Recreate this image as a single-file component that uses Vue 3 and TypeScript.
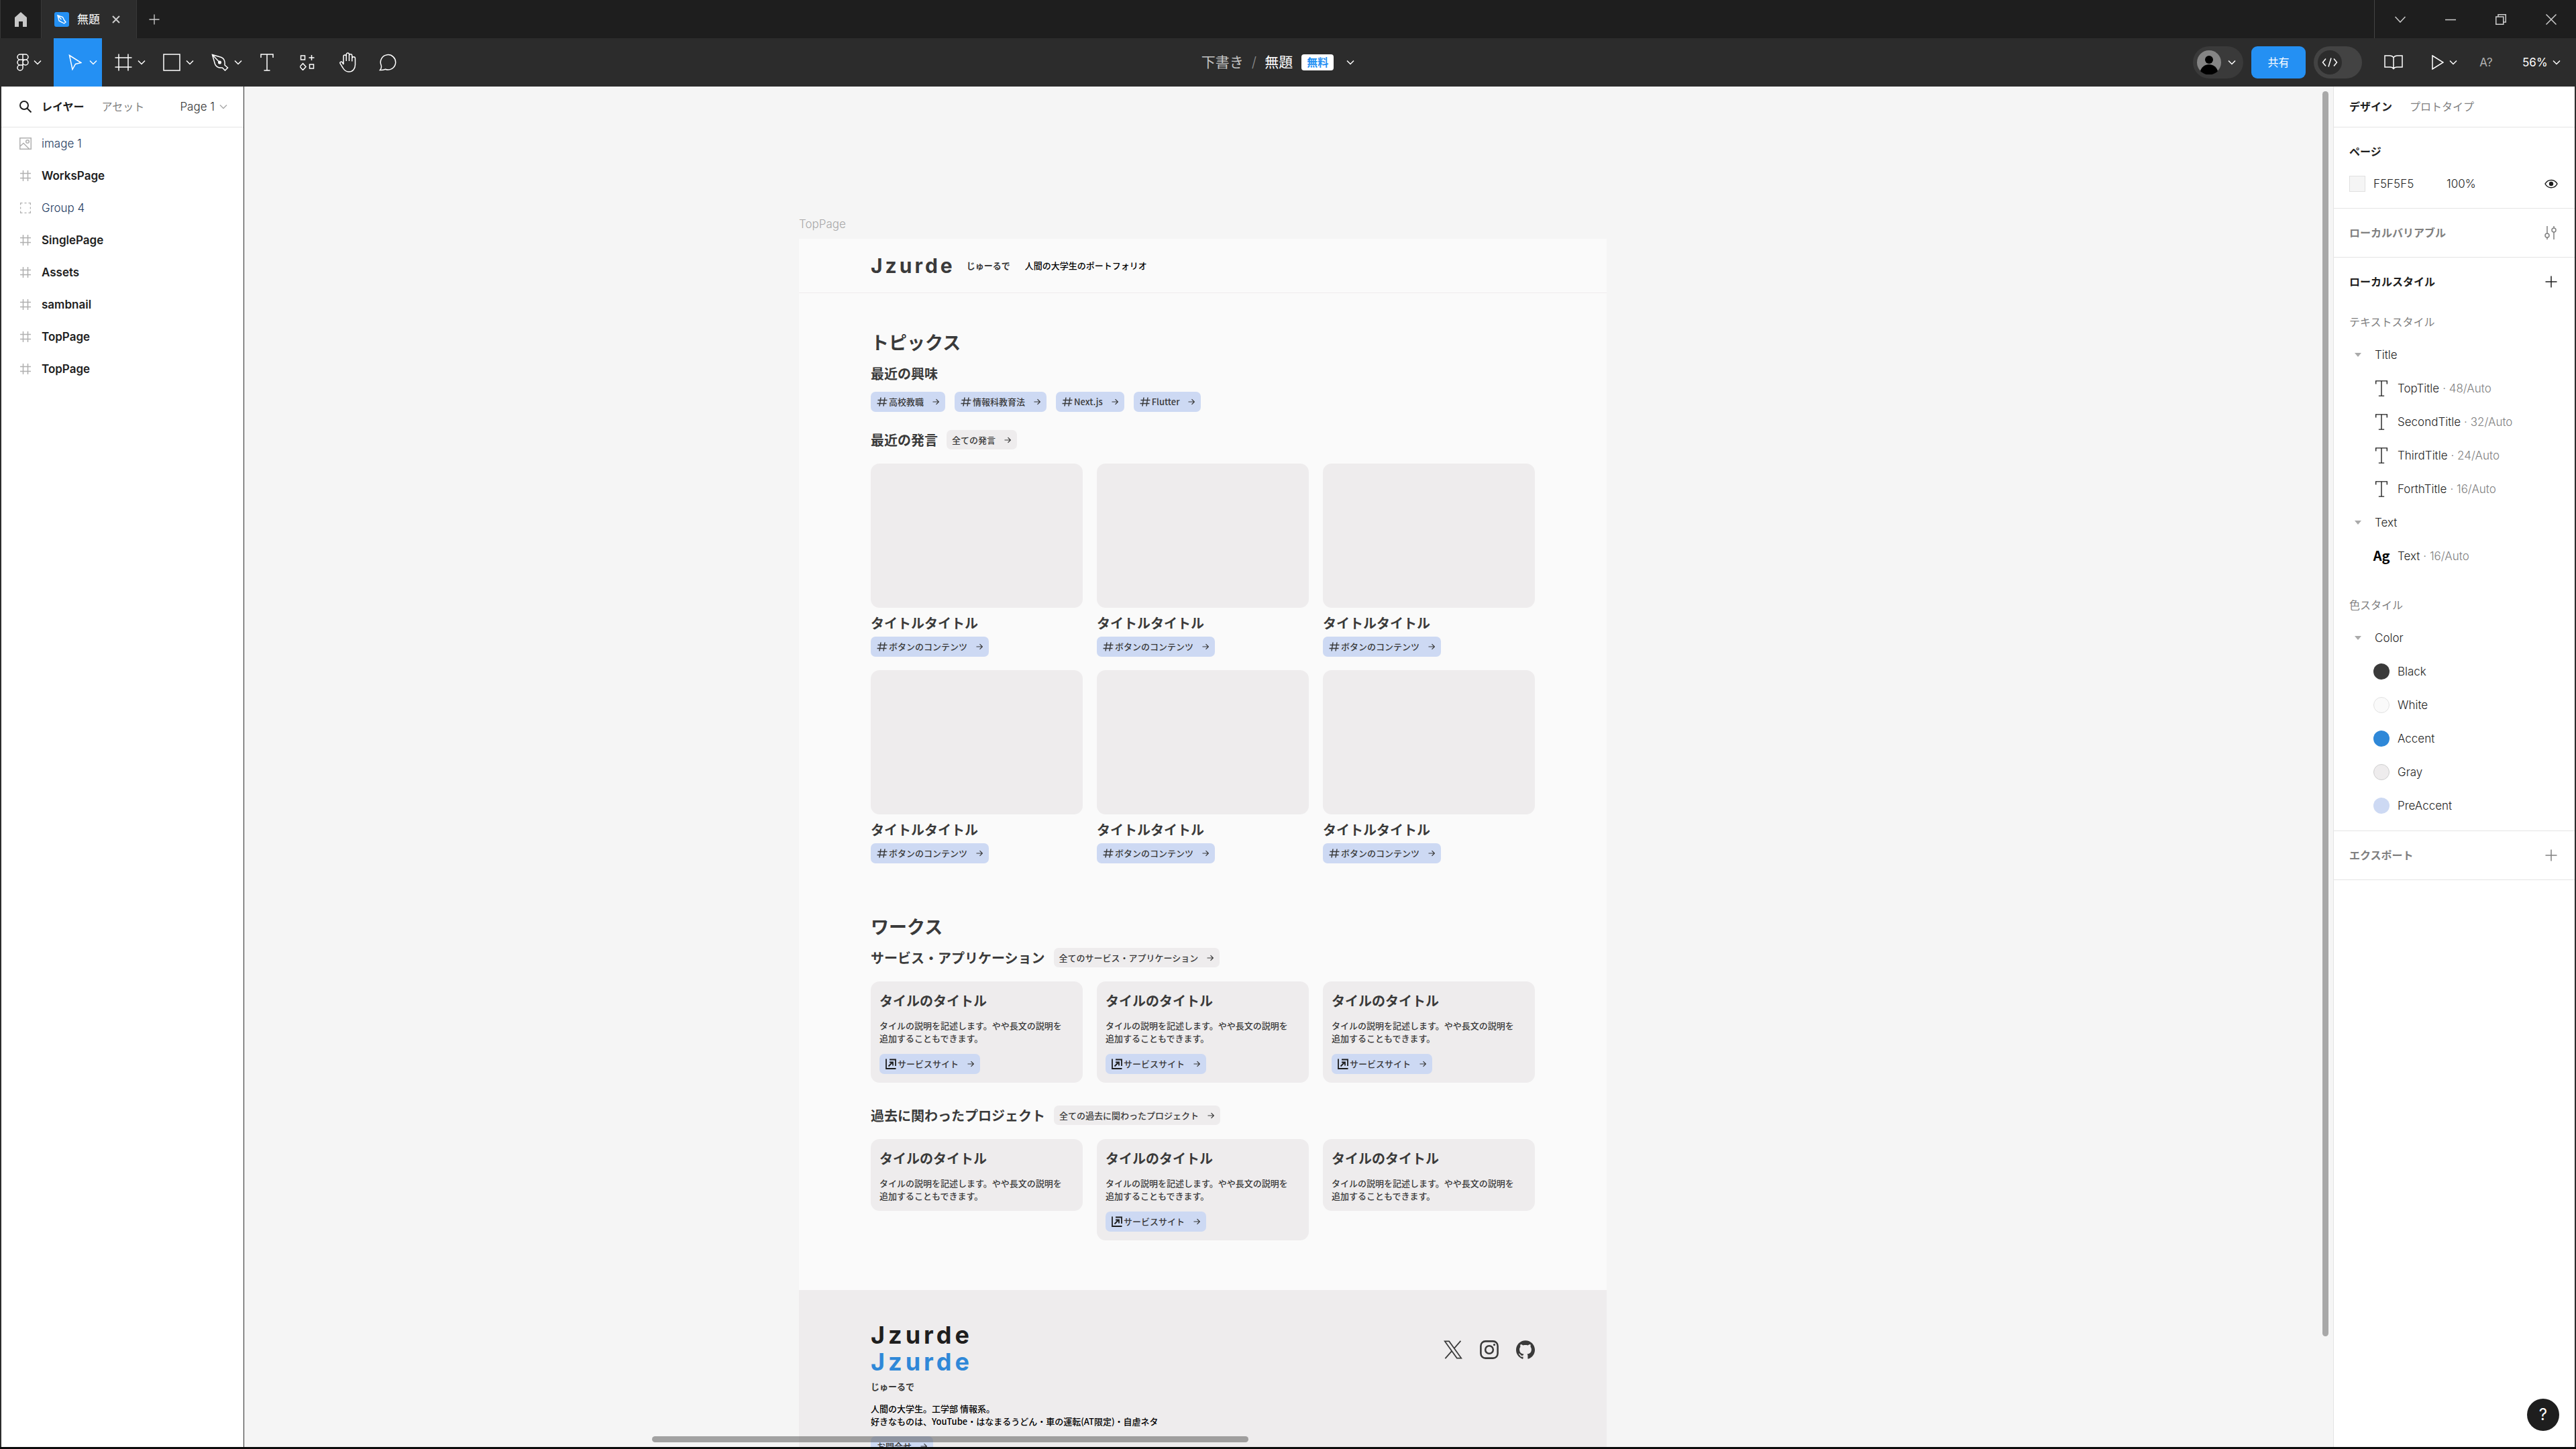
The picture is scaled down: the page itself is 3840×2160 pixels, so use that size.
<script setup lang="ts">
interface Layer { name: string; icon: string; bold: boolean }
interface Work { title: string; body: string; link: boolean }

const layers: Layer[] = [
  { name: 'image 1', icon: 'image', bold: false },
  { name: 'WorksPage', icon: 'hash', bold: true },
  { name: 'Group 4', icon: 'group', bold: false },
  { name: 'SinglePage', icon: 'hash', bold: true },
  { name: 'Assets', icon: 'hash', bold: true },
  { name: 'sambnail', icon: 'hash', bold: true },
  { name: 'TopPage', icon: 'hash', bold: true },
  { name: 'TopPage', icon: 'hash', bold: true },
]
const menuTools = [
  { label: 'メインメニュー', icon: 'figma', w: 18, h: 26, active: false },
  { label: '移動', icon: 'move', w: 20, h: 24, active: true },
  { label: 'フレーム', icon: 'frame', w: 26, h: 26, active: false },
  { label: '長方形', icon: 'rect', w: 26, h: 26, active: false },
  { label: 'ペン', icon: 'pen', w: 26, h: 26, active: false },
]
const tools = [
  { label: 'テキスト', icon: 'text', w: 20, h: 26 },
  { label: 'リソース', icon: 'parts', w: 22, h: 24 },
  { label: '手のひらツール', icon: 'hand', w: 26, h: 30 },
  { label: 'コメント', icon: 'comment', w: 26, h: 26 },
]
const interests = ['高校教職', '情報科教育法', 'Next.js', 'Flutter']
const posts = Array.from({ length: 6 }, () => ({ title: 'タイトルタイトル', tag: 'ボタンのコンテンツ' }))
const body = 'タイルの説明を記述します。やや長文の説明を\n追加することもできます。'
const makeWorks = (links: boolean[]): Work[] =>
  links.map((link) => ({ title: 'タイルのタイトル', body, link }))
const workGroups = [
  { title: 'サービス・アプリケーション', all: '全てのサービス・アプリケーション', works: makeWorks([true, true, true]) },
  { title: '過去に関わったプロジェクト', all: '全ての過去に関わったプロジェクト', works: makeWorks([false, true, false]) },
]
const textStyles = [
  { name: 'TopTitle', size: '48/Auto' },
  { name: 'SecondTitle', size: '32/Auto' },
  { name: 'ThirdTitle', size: '24/Auto' },
  { name: 'ForthTitle', size: '16/Auto' },
]
const colors = [
  { name: 'Black', key: 'black' },
  { name: 'White', key: 'white' },
  { name: 'Accent', key: 'accent' },
  { name: 'Gray', key: 'gray' },
  { name: 'PreAccent', key: 'pre' },
]
</script>

<template>
  <div class="app">
    <svg class="defs" aria-hidden="true">
      <symbol id="i-chev" viewBox="0 0 12 8"><path d="M1 1.5l5 5 5-5" /></symbol>
      <symbol id="i-figma" viewBox="0 0 18 26"><path d="M9 1H5a4 4 0 0 0 0 8h4zM9 1h4a4 4 0 0 1 0 8H9zM9 9H5a4 4 0 0 0 0 8h4zM13 9a4 4 0 1 1 0 8 4 4 0 0 1 0-8zM9 17H5a4 4 0 1 0 4 4z" /></symbol>
      <symbol id="i-move" viewBox="0 0 20 24"><path d="M1.5 1.5L19 12.500l-8.500 2-4.500 8z" /></symbol>
      <symbol id="i-frame" viewBox="0 0 26 26"><path d="M6 .5v25M20 .5v25M.5 6h25M.5 20h25" /></symbol>
      <symbol id="i-rect" viewBox="0 0 26 26"><path d="M1 1h24v24H1z" /></symbol>
      <symbol id="i-pen" viewBox="0 0 26 26"><path d="M1.500 1.500L15 5.500c4 1.500 5.500 6.500 5 11.500l4.500 4-4 4-4-4c-5 .5-9.500-1.500-11-5.500zM1.500 1.500l9.500 10" /><circle cx="12.500" cy="13" r="1.800" fill="currentColor" /></symbol>
      <symbol id="i-text" viewBox="0 0 20 26"><path d="M1 6V1h18v5M10 1v24M5.500 25h9" /></symbol>
      <symbol id="i-parts" viewBox="0 0 22 24"><path d="M1.500 2h6v6h-6zM14.500 15h6v6h-6zM17.500 1v8M13.500 5h8M4.500 13.500l4.500 5-4.500 5-4.500-5z" /></symbol>
      <symbol id="i-hand" viewBox="0 0 26 30"><path d="M7 18V6a2.100 2.100 0 0 1 4.200 0v7M11.200 13V3.200a2.100 2.100 0 0 1 4.300 0V13M15.500 5a2.100 2.100 0 0 1 4.300 0v8.500M19.800 9a2.300 2.300 0 0 1 4.700 0v9.500c0 6-3.500 10.500-9.500 10.500-4.500 0-7-2.500-9-6l-4-6.500c-.8-2 1.800-3.300 3.200-1.600L7 18" /></symbol>
      <symbol id="i-comment" viewBox="0 0 26 26"><path d="M1.500 24.500c1.700-2 2.600-4.500 1.600-7.500A11.200 11.200 0 1 1 9.500 23.300c-2.500 1-5.500 1.300-8 1.200z" /></symbol>
      <symbol id="i-hash" viewBox="0 0 16 16"><path d="M4.500 0v16M11.500 0v16M0 4.500h16M0 11.500h16" /></symbol>
      <symbol id="i-group" viewBox="0 0 16 16"><path d="M.5 3.500v-3h3M6.500.5h3M12.500.5h3v3M15.500 6.500v3M15.500 12.500v3h-3M9.500 15.500h-3M3.500 15.500h-3v-3M.5 9.500v-3" /></symbol>
      <symbol id="i-image" viewBox="0 0 18 18"><path d="M.75.75h16.500v16.500H.75zM1 13l5-4.500 8.500 8.500" /><circle cx="12" cy="6" r="2.300" /></symbol>
      <symbol id="i-tag" viewBox="0 0 16 16"><path d="M6 1.500l-2 13M12 1.500l-2 13M1.500 5.500h14M.5 10.500h14" /></symbol>
      <symbol id="i-arrow" viewBox="0 0 10 10"><path d="M.5 5h8.500M5.500 1.200L9.300 5 5.500 8.800" /></symbol>
      <symbol id="i-site" viewBox="0 0 16 16"><path d="M1 .500V15h14.500M6 1.500h9V11M4.500 11.500l6-6M6 5.500h5v5" /></symbol>
      <symbol id="i-plus" viewBox="0 0 18 18"><path d="M9 .5v17M.5 9h17" /></symbol>
    </svg>

    <header class="tabs">
      <button class="home" aria-label="ホーム"><svg width="18" height="22" viewBox="0 0 18 22"><path fill="#c8c8c8" d="M9 0l9 8v14h-6v-8H6v8H0V8z" /></svg></button>
      <div class="file-tab">
        <svg width="22" height="22" viewBox="0 0 22 22"><rect width="22" height="22" rx="3" fill="#2490f3" /><path d="M5 5l7.500 2.500 2.500 5 2 2.500-2.500 2-2.500-1.500-5-2.500zM5 5l5.500 6" fill="none" stroke="#fff" stroke-width="1.400" /></svg>
        <span class="file-name">無題</span>
        <button class="plain" aria-label="タブを閉じる"><svg width="12" height="12" viewBox="0 0 12 12"><path d="M1 1l10 10M11 1L1 11" stroke="#ccc" stroke-width="2" /></svg></button>
      </div>
      <button class="plain new-tab" aria-label="新規タブ"><svg class="line" width="16" height="16"><use href="#i-plus" /></svg></button>
      <div class="window">
        <button aria-label="タブ一覧"><svg width="16" height="10" viewBox="0 0 16 10"><path d="M.5 1l7.500 8 7.500-8" /></svg></button>
        <button aria-label="最小化"><svg width="16" height="16" viewBox="0 0 16 16"><path d="M0 8.500h16" /></svg></button>
        <button aria-label="元に戻す"><svg width="16" height="16" viewBox="0 0 16 16"><path d="M.75 4h11v11.250h-11zM4 4V.75h11.250V12h-3.500" /></svg></button>
        <button aria-label="閉じる"><svg width="16" height="16" viewBox="0 0 16 16"><path d="M.5.5l15 15M15.500.5l-15 15" /></svg></button>
      </div>
    </header>

    <div class="toolbar">
      <div class="tools">
        <button v-for="t in menuTools" :key="t.icon" class="menu-tool" :class="{ active: t.active }" :aria-label="t.label">
          <span class="tool-icon"><svg class="line" :width="t.w" :height="t.h"><use :href="`#i-${t.icon}`" /></svg></span>
          <svg class="line chev"><use href="#i-chev" /></svg>
        </button>
        <button v-for="t in tools" :key="t.icon" class="tool" :aria-label="t.label">
          <svg class="line" :width="t.w" :height="t.h"><use :href="`#i-${t.icon}`" /></svg>
        </button>
      </div>
      <div class="doc">
        <a class="folder" href="#drafts">下書き</a>
        <span class="slash">/</span>
        <span class="doc-name">無題</span>
        <span class="free">無料</span>
        <button class="plain doc-menu" aria-label="ファイルメニュー"><svg class="line chev"><use href="#i-chev" /></svg></button>
      </div>
      <div class="actions">
        <button class="account" aria-label="アカウント">
          <svg width="36" height="36" viewBox="0 0 36 36"><circle cx="18" cy="18" r="18" fill="#858585" /><circle cx="18" cy="14" r="6" /><path d="M5 31c1.500-6 7-10 13-10s11.500 4 13 10a18 18 0 0 1-26 0z" /></svg>
          <svg class="line chev"><use href="#i-chev" /></svg>
        </button>
        <button class="share">共有</button>
        <button class="dev" aria-label="開発モード"><span><svg class="line" width="24" height="14" viewBox="0 0 24 14"><path d="M6 1.500L1.500 7 6 12.500M18 1.500L22.500 7 18 12.500M14 .5l-4 13" /></svg></span></button>
        <button class="tool book" aria-label="ライブラリ"><svg class="line" width="28" height="22" viewBox="0 0 28 22"><path d="M14 4c-1-2-3-3-6-3H1v17h8c3 0 4 1 5 2.500 1-1.500 2-2.500 5-2.500h8V1h-7c-3 0-5 1-6 3zM14 4v16" /></svg></button>
        <button class="play" aria-label="再生"><svg class="line" width="18" height="22" viewBox="0 0 18 22"><path d="M1 1l16 10L1 21z" /></svg><svg class="line chev"><use href="#i-chev" /></svg></button>
        <button class="tool missing" aria-label="不足しているフォント">A?</button>
        <button class="zoom">56%<svg class="line chev"><use href="#i-chev" /></svg></button>
      </div>
    </div>

    <div class="work">
      <aside class="left">
        <div class="left-head">
          <button class="plain search" aria-label="検索"><svg width="18" height="18" viewBox="0 0 18 18"><circle cx="7" cy="7" r="6" /><path d="M11.500 11.500l6 6" /></svg></button>
          <button class="plain on">レイヤー</button>
          <button class="plain off">アセット</button>
          <button class="plain pages">Page 1<svg class="line chev"><use href="#i-chev" /></svg></button>
        </div>
        <ul class="layers">
          <li v-for="(l, i) in layers" :key="i">
            <button class="layer" :class="{ bold: l.bold }">
              <span class="layer-icon"><svg class="line" :class="l.icon"><use :href="`#i-${l.icon}`" /></svg></span>{{ l.name }}
            </button>
          </li>
        </ul>
      </aside>

      <main class="canvas">
        <div class="artboard">
          <div class="board-label">TopPage</div>
          <div class="board">
            <div class="site-head">
              <span class="logo">Jzurde</span>
              <span class="reading">じゅーるで</span>
              <span class="lead">人間の大学生のポートフォリオ</span>
            </div>
            <div class="site-main">
              <h2>トピックス</h2>
              <div class="sub"><h3>最近の興味</h3></div>
              <div class="chips">
                <a v-for="t in interests" :key="t" class="chip" href="#tag"><svg class="chip-icon"><use href="#i-tag" /></svg>{{ t }}<svg class="arrow"><use href="#i-arrow" /></svg></a>
              </div>
              <div class="sub"><h3>最近の発言</h3><a class="all" href="#all">全ての発言<svg class="arrow"><use href="#i-arrow" /></svg></a></div>
              <div class="grid">
                <article v-for="(p, i) in posts" :key="i" class="post">
                  <div class="thumb"></div>
                  <h4>{{ p.title }}</h4>
                  <a class="chip" href="#tag"><svg class="chip-icon"><use href="#i-tag" /></svg>{{ p.tag }}<svg class="arrow"><use href="#i-arrow" /></svg></a>
                </article>
              </div>
              <h2 class="works">ワークス</h2>
              <section v-for="g in workGroups" :key="g.title" class="group">
                <div class="sub"><h3>{{ g.title }}</h3><a class="all" href="#all">{{ g.all }}<svg class="arrow"><use href="#i-arrow" /></svg></a></div>
                <div class="grid">
                  <article v-for="(w, i) in g.works" :key="i" class="tile">
                    <h4>{{ w.title }}</h4>
                    <p>{{ w.body }}</p>
                    <a v-if="w.link" class="chip" href="#site"><svg class="chip-icon site"><use href="#i-site" /></svg>サービスサイト<svg class="arrow"><use href="#i-arrow" /></svg></a>
                  </article>
                </div>
              </section>
            </div>
            <footer class="site-foot">
              <div>
                <div class="big-logo">Jzurde</div>
                <div class="big-logo accent">Jzurde</div>
                <div class="foot-reading">じゅーるで</div>
                <p>人間の大学生。工学部 情報系。<br />好きなものは、YouTube・はなまるうどん・車の運転(AT限定)・自虐ネタ</p>
                <a class="chip contact" href="#contact">お問合せ<svg class="arrow"><use href="#i-arrow" /></svg></a>
              </div>
              <div class="social">
                <a href="#x" aria-label="X"><svg class="stroked" viewBox="0 0 24 24"><path d="M1.500 1.200h5.500l15.500 21.600H17zM21.800.8l-8.800 10M10.500 13.600L2 23.200" stroke-width="1.500" /></svg></a>
                <a href="#instagram" aria-label="Instagram"><svg class="stroked" viewBox="0 0 24 24"><rect x="1.200" y="1.200" width="21.600" height="21.600" rx="6" stroke-width="2.200" /><circle cx="12" cy="12" r="5" stroke-width="2.200" /><circle cx="18.400" cy="5.600" r=".7" stroke-width="1.400" /></svg></a>
                <a href="#github" aria-label="GitHub"><svg viewBox="0 0 24 24"><path d="M12 .297c-6.630 0-12 5.373-12 12 0 5.303 3.438 9.800 8.205 11.385.6.113.82-.258.82-.577 0-.285-.010-1.040-.015-2.040-3.338.724-4.042-1.610-4.042-1.610C4.422 18.070 3.633 17.700 3.633 17.700c-1.087-.744.084-.729.084-.729 1.205.084 1.838 1.236 1.838 1.236 1.070 1.835 2.809 1.305 3.495.998.108-.776.417-1.305.76-1.605-2.665-.3-5.466-1.332-5.466-5.930 0-1.310.465-2.380 1.235-3.220-.135-.303-.54-1.523.105-3.176 0 0 1.005-.322 3.300 1.230.96-.267 1.980-.399 3-.405 1.020.006 2.040.138 3 .405 2.280-1.552 3.285-1.230 3.285-1.230.645 1.653.24 2.873.12 3.176.765.84 1.230 1.910 1.230 3.220 0 4.610-2.805 5.625-5.475 5.920.42.36.81 1.096.81 2.220 0 1.606-.015 2.896-.015 3.286 0 .315.21.69.825.57C20.565 22.092 24 17.592 24 12.297c0-6.627-5.373-12-12-12" /></svg></a>
              </div>
            </footer>
          </div>
        </div>
        <div class="bar-v"></div>
        <div class="bar-h"></div>
      </main>

      <aside class="right">
        <div class="right-head">
          <button class="plain on">デザイン</button>
          <button class="plain off">プロトタイプ</button>
        </div>
        <section class="page-props">
          <h5>ページ</h5>
          <div class="fill">
            <span class="swatch"></span>
            <input class="hex" aria-label="背景色" value="F5F5F5" />
            <input class="alpha" aria-label="不透明度" value="100%" />
            <button class="plain" aria-label="表示"><svg width="20" height="14" viewBox="0 0 20 14"><path d="M1 7c4-7.500 14-7.500 18 0-4 7.500-14 7.500-18 0z" fill="none" stroke="#1e1e1e" stroke-width="1.500" /><circle cx="10" cy="7" r="3.200" fill="#1e1e1e" /></svg></button>
          </div>
        </section>
        <section class="row72 dim">
          <h5>ローカルバリアブル</h5>
          <button class="plain" aria-label="バリアブルを開く"><svg class="line" width="20" height="22" viewBox="0 0 20 22"><path d="M5 1v11M5 18v3M15 1v3M15 10v11" /><circle cx="5" cy="15" r="3" /><circle cx="15" cy="7" r="3" /></svg></button>
        </section>
        <section class="styles">
          <div class="row72">
            <h5>ローカルスタイル</h5>
            <button class="plain" aria-label="スタイルを追加"><svg class="line" width="18" height="18"><use href="#i-plus" /></svg></button>
          </div>
          <div class="caption">テキストスタイル</div>
          <button class="fold"><i></i>Title</button>
          <button v-for="s in textStyles" :key="s.name" class="style">
            <span class="mark"><svg class="line" width="20" height="24" viewBox="0 0 20 26"><use href="#i-text" /></svg></span>{{ s.name }}<em>· {{ s.size }}</em>
          </button>
          <button class="fold"><i></i>Text</button>
          <button class="style"><span class="mark ag">Ag</span>Text<em>· 16/Auto</em></button>
          <div class="caption second">色スタイル</div>
          <button class="fold"><i></i>Color</button>
          <button v-for="c in colors" :key="c.key" class="style"><span class="mark dot" :class="c.key"></span>{{ c.name }}</button>
        </section>
        <section class="row72 dim">
          <h5>エクスポート</h5>
          <button class="plain" aria-label="エクスポートを追加"><svg class="line" width="18" height="18"><use href="#i-plus" /></svg></button>
        </section>
        <button class="help" aria-label="ヘルプ">?</button>
      </aside>
    </div>
  </div>
</template>

<style>
body { margin: 0; background: #111; }
</style>

<style scoped>
* { box-sizing: border-box; }
.app {
  display: flex; flex-direction: column; height: 100vh; overflow: hidden;
  border-bottom: 3px solid #0c0c0c;
  font-family: Inter, "Noto Sans CJK JP", sans-serif; font-size: 16px; line-height: 24px; color: #1e1e1e;
}
.defs { position: absolute; width: 0; height: 0; }
svg { display: block; flex: none; }
button { font: inherit; color: inherit; border: 0; background: none; padding: 0; margin: 0; }
a { color: inherit; text-decoration: none; }
h2, h3, h4, h5, p, ul { margin: 0; padding: 0; }
.plain { display: flex; align-items: center; }
.line { fill: none; stroke: currentColor; stroke-width: 1.5; }
.chev { width: 12px; height: 8px; }

.tabs { display: flex; height: 57px; background: #1e1e1e; color: #ccc; flex: none; }
.home { width: 62px; border-left: 1px solid #383838; border-right: 1px solid #383838; display: flex; align-items: center; justify-content: center; }
.file-tab { display: flex; align-items: center; width: 142px; padding-left: 19px; background: #2c2c2c; border-right: 1px solid #383838; }
.file-name { margin: 0 18px 0 12px; font-size: 17px; color: #fff; }
.new-tab { padding-left: 18px; }
.window { display: flex; margin-left: auto; border-left: 1px solid #444; }
.window button { width: 75px; display: flex; align-items: center; justify-content: center; }
.window svg { fill: none; stroke: #ccc; stroke-width: 1.5; }

.toolbar { display: grid; grid-template-columns: 1fr auto 1fr; height: 72px; background: #2c2c2c; color: #fff; flex: none; }
.tools { display: flex; padding-left: 8px; }
.menu-tool { display: flex; align-items: center; width: 72px; padding-left: 16px; }
.menu-tool.active { background: #2490f3; }
.tool-icon { width: 32px; margin-right: 5px; display: flex; justify-content: center; }
.menu-tool:first-child { padding-left: 10px; }
.menu-tool:first-child .tool-icon { margin-right: 0; }
.tool { width: 60px; display: flex; align-items: center; justify-content: center; }
.doc { display: flex; align-items: center; font-size: 21px; }
.folder { color: #c4c4c4; }
.slash { margin: 0 12px; color: #8a8a8a; font-weight: 300; }
.free { margin-left: 13px; width: 48px; height: 24px; border-radius: 4px; background: #fff; color: #2490f3; font-size: 16px; font-weight: 700; line-height: 24px; text-align: center; }
.doc-menu { padding: 0 30px 0 19px; }
.actions { display: flex; align-items: center; justify-content: flex-end; }
.account { display: flex; align-items: center; gap: 10px; width: 75px; height: 48px; padding-left: 6px; border-radius: 24px; background: #3a3a3a; }
.share { width: 81px; height: 48px; margin: 0 12px; border-radius: 9px; background: #2490f3; }
.dev { width: 72px; height: 48px; padding: 6px; border-radius: 24px; background: #434343; }
.dev span { display: flex; align-items: center; justify-content: center; width: 36px; height: 36px; border-radius: 50%; background: #2c2c2c; }
.book { margin-left: 17px; }
.play { display: flex; align-items: center; gap: 8px; width: 78px; padding-left: 27px; }
.missing { font-size: 17px; color: #b0b0b0; }
.zoom { display: flex; align-items: center; gap: 7px; width: 104px; padding-left: 24px; font-size: 17px; }

.work { display: grid; grid-template-columns: 364px minmax(0, 1fr) 362px; flex: 1; min-height: 0; }
.left { background: #fff; border-left: 2px solid #2c2c2c; border-right: 1px solid #2c2c2c; }
.left-head { display: flex; align-items: center; height: 61px; padding: 0 24px 0 27px; border-bottom: 1px solid #e4e4e4; }
.search svg { fill: none; stroke: #1e1e1e; stroke-width: 2; }
.search { margin-right: 15px; }
.on { font-weight: 700; }
.off { margin-left: 26px; color: #808080; }
.pages { margin-left: auto; gap: 7px; color: #333; font-size: 17px; font-weight: 300; }
.pages .chev { color: #aaa; }
.layers { list-style: none; }
.layer { display: flex; align-items: center; width: 100%; height: 48px; padding-left: 26px; font-size: 17px; font-weight: 300; color: #1c3a60; text-align: left; }
.layer.bold { font-weight: 600; color: #1e1e1e; }
.layer-icon { display: flex; justify-content: center; width: 20px; margin-right: 14px; color: #b0b0b0; }
.layer-icon svg { width: 16px; height: 16px; }
.layer-icon svg.image { width: 18px; height: 18px; }

.canvas { position: relative; overflow: hidden; background: #f5f5f5; }
.artboard { position: absolute; left: 827px; top: 193px; width: 1204px; font-family: "Noto Sans CJK JP", sans-serif; font-size: 13px; color: #3a3a3a; }
.board-label { height: 34px; font-family: Inter, sans-serif; font-size: 17px; font-weight: 300; line-height: 24px; color: #a8a8a8; }
.board { background: #fafafa; }
.site-head { display: flex; align-items: center; height: 81px; padding-left: 107px; border-bottom: 1px solid #eeeced; font-weight: 700; }
.logo, .big-logo { font-family: Inter, sans-serif; font-weight: 700; }
.logo { font-size: 30px; letter-spacing: 4px; line-height: 40px; }
.reading { margin: 0 22px 0 17px; }
.lead { color: #000; font-weight: 500; }
.site-main { padding: 53px 107px 74px; }
h2 { font-size: 27px; line-height: 40px; font-weight: 700; margin-bottom: 12px; }
.sub { display: flex; align-items: center; gap: 13px; height: 29px; }
h3, h4 { font-size: 20px; line-height: 29px; font-weight: 700; }
.chips { display: flex; gap: 14px; margin: 13px 0 27px; }
.chip { display: inline-flex; align-items: center; height: 30px; padding: 0 9px; border-radius: 7px; background: #cdd9f3; font-weight: 500; }
.chip-icon { width: 16px; height: 16px; margin-right: 2px; fill: none; stroke: #3a3a3a; stroke-width: 1.5; }
.chip-icon.site { stroke: #1e1e1e; stroke-width: 1.8; }
.arrow { width: 10px; height: 10px; margin-left: 13px; fill: none; stroke: #3a3a3a; stroke-width: 1.2; }
.all { display: flex; align-items: center; height: 29px; padding: 0 9px 0 8px; border-radius: 7px; background: #eeeced; font-weight: 500; }
.grid { display: grid; grid-template-columns: repeat(3, minmax(0, 1fr)); gap: 20px 21px; align-items: start; margin-top: 21px; }
.thumb { height: 215px; border-radius: 13px; background: #eeeced; }
.post h4 { margin: 8px 0 6px; }
.post .chip { display: flex; width: fit-content; }
.works { margin-top: 74px; }
.group + .group { margin-top: 34px; }
.tile { padding: 14px 13px 13px; border-radius: 13px; background: #eeeced; }
.tile p { margin-top: 13px; line-height: 19px; white-space: pre-line; font-weight: 500; }
.tile .chip { display: flex; width: fit-content; margin-top: 14px; }
.site-foot { display: flex; justify-content: space-between; height: 420px; padding: 47px 107px 0; background: #eeeced; }
.big-logo { font-size: 36px; line-height: 40px; letter-spacing: 5px; color: #1e1e1e; }
.big-logo.accent { color: #2f88d8; }
.foot-reading { margin-top: 7px; line-height: 20px; font-weight: 700; }
.site-foot p { margin-top: 13px; line-height: 19px; font-weight: 500; color: #000; }
.contact { margin-top: 13px; }
.social { display: flex; gap: 26px; height: 28px; margin-top: 28px; }
.social svg { width: 28px; height: 28px; fill: #3a3a3a; }
.social svg.stroked { fill: none; stroke: #3a3a3a; }
.bar-v { position: absolute; right: 7px; top: 7px; width: 9px; height: 1856px; border-radius: 5px; background: #a8a8a8; }
.bar-h { position: absolute; left: 608px; bottom: 7px; width: 889px; height: 9px; border-radius: 5px; background: rgba(80, 80, 80, .5); }

.right { position: relative; background: #fff; border-left: 1px solid #e4e4e4; border-right: 2px solid #2c2c2c; }
.right > * { border-bottom: 1px solid #e4e4e4; }
.right-head { display: flex; align-items: center; height: 61px; padding-left: 23px; }
h5 { font-size: 16px; line-height: 24px; font-weight: 700; }
.page-props { padding: 12px 25px 12px 23px; }
.page-props h5 { height: 48px; line-height: 48px; }
.fill { display: flex; align-items: center; height: 48px; }
.swatch { width: 24px; height: 24px; background: #f5f5f5; border: 1px solid #e0e0e0; margin-right: 12px; }
input { font: inherit; font-size: 17px; font-weight: 300; color: #222; border: 0; padding: 0; background: none; }
.hex { width: 109px; }
.alpha { width: 60px; }
.fill button { margin-left: auto; }
.row72 { display: flex; align-items: center; justify-content: space-between; height: 72px; padding: 0 26px 0 23px; }
section.row72 { height: 73px; }
.dim { color: #808080; }
.styles { padding-bottom: 12px; }
.caption { height: 48px; line-height: 48px; padding-left: 23px; color: #808080; }
.caption.second { margin-top: 24px; }
.fold, .style { display: flex; align-items: center; width: 100%; height: 50px; font-size: 17px; font-weight: 300; color: #1e1e1e; }
.fold { padding-left: 31px; }
.fold i { width: 0; border: 5px solid transparent; border-top: 6px solid #aaa; border-bottom: 0; margin-right: 20px; }
.style { padding-left: 59px; }
.style em { margin-left: 5px; font-style: normal; color: #808080; }
.mark { display: flex; justify-content: center; width: 24px; height: 24px; margin-right: 12px; color: #1e1e1e; }
.ag { font-family: "Noto Sans CJK JP", sans-serif; font-size: 20px; line-height: 22px; font-weight: 700; color: #000; }
.dot { border-radius: 50%; }
.black { background: #3a3a3a; }
.white { background: #fafafa; border: 1px solid #e2e2e2; }
.accent.dot { background: #2f88d8; }
.gray { background: #eeeced; border: 1px solid #cfcfcf; }
.pre { background: #cdd9f3; }
.help { position: absolute; right: 23px; bottom: 24px; width: 48px; height: 48px; border: 0; border-radius: 50%; background: #1e1e1e; color: #fff; font-size: 24px; }
</style>
